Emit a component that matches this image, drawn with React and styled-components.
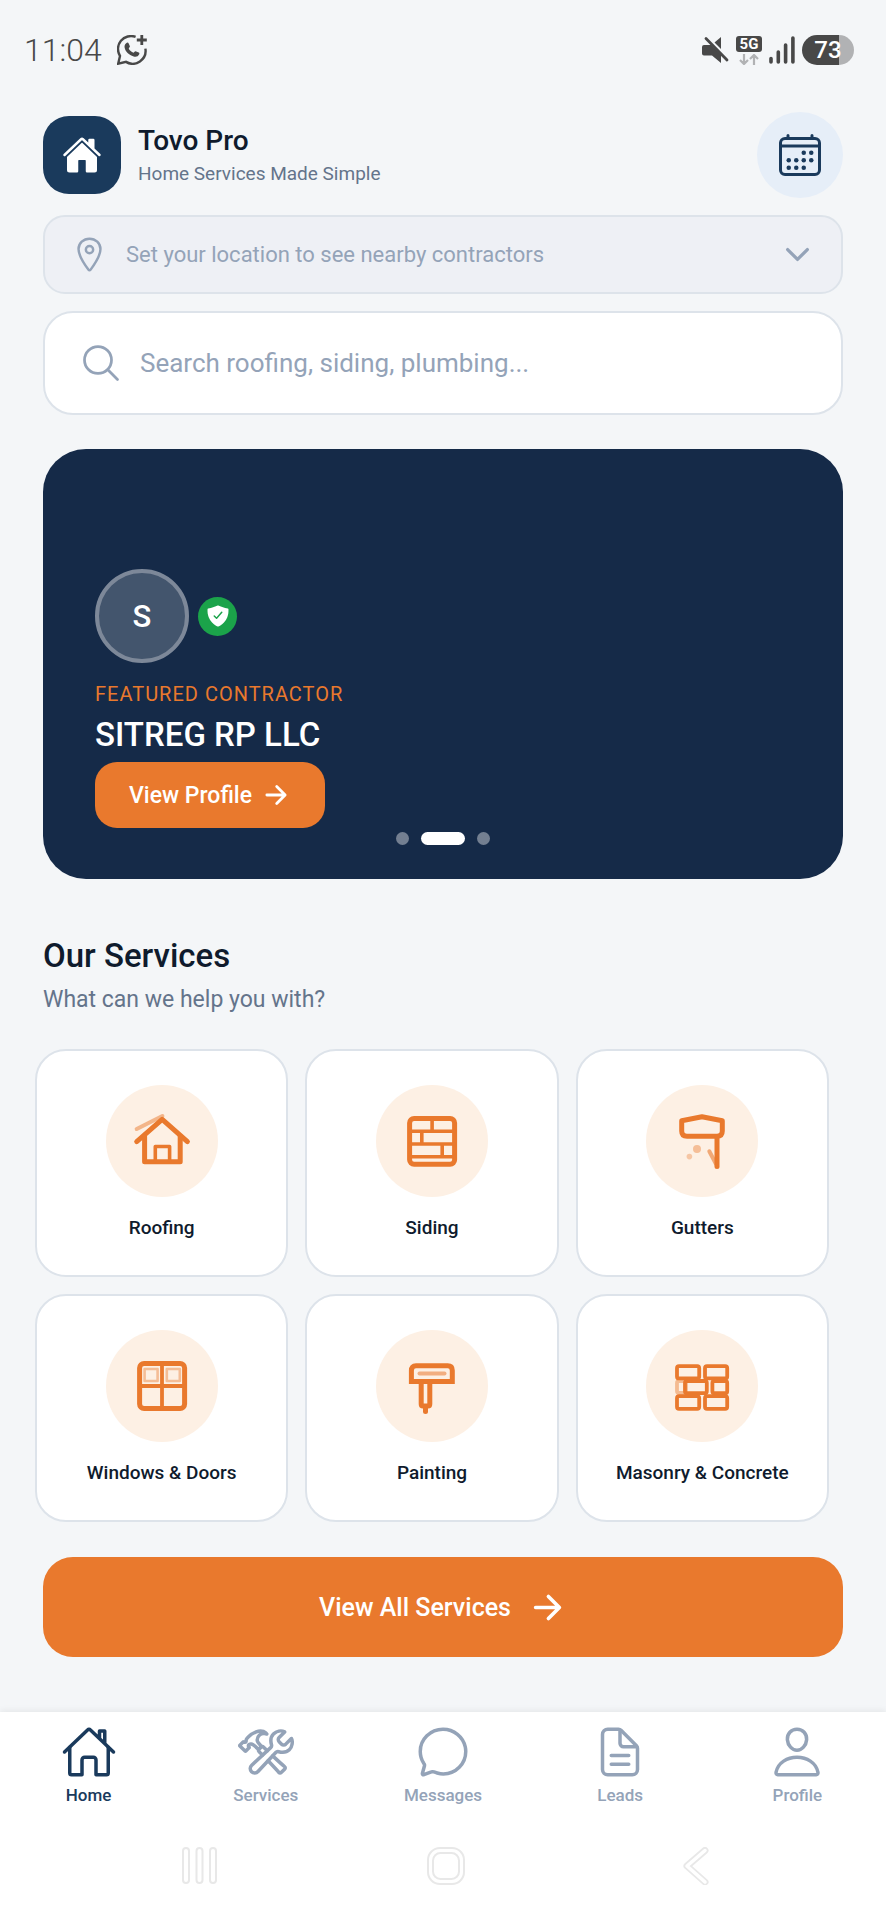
import React from "react";
import styled, { createGlobalStyle } from "styled-components";
import {
  IoHome,
  IoHomeOutline,
  IoCalendarOutline,
  IoLocationOutline,
  IoSearchOutline,
  IoChevronDown,
  IoArrowForward,
  IoShieldCheckmark,
  IoConstructOutline,
  IoChatbubbleOutline,
  IoDocumentTextOutline,
  IoPersonOutline,
} from "react-icons/io5";

const color = {
  page: "#f4f6f8",
  navy: "#1a3a5c",
  deep: "#152a48",
  ink: "#0f1b2d",
  slate: "#64748b",
  muted: "#94a3b8",
  line: "#dde3ea",
  orange: "#e9792d",
  peach: "#fdf0e4",
  status: "#484848",
};

const GlobalStyle = createGlobalStyle`
  *, *::before, *::after { box-sizing: border-box; }
  body { margin: 0; background: ${color.page}; }
  body, button, input { font-family: Roboto, "Liberation Sans", sans-serif; }
  button { border: 0; padding: 0; cursor: pointer; }
  h1, h2, p { margin: 0; font-weight: 400; }
  svg { display: block; flex: none; }
`;

const Screen = styled.div`
  display: flex;
  flex-direction: column;
  min-height: 100vh;
`;

const StatusBar = styled.div`
  display: flex;
  align-items: center;
  justify-content: space-between;
  height: 100px;
  padding: 0 32px 0 24px;
  color: ${color.status};
`;

const StatusGroup = styled.div`
  display: flex;
  align-items: center;
  gap: ${(p) => p.$gap}px;
`;

const Clock = styled.span`
  font-size: 32px;
  line-height: 40px;
  font-weight: 300;
`;

const Network = styled.div`
  display: flex;
  flex-direction: column;
  align-items: center;
  gap: 2px;
`;

const NetworkLabel = styled.span`
  width: 26px;
  border-radius: 3px;
  background: ${color.status};
  color: #fff;
  font-size: 15px;
  line-height: 16px;
  font-weight: 700;
  text-align: center;
`;

const Battery = styled.span`
  width: 52px;
  border-radius: 15px;
  background: linear-gradient(to right, ${color.status} 72%, #b1b2b4 72%);
  color: #fff;
  font-size: 24px;
  line-height: 30px;
  font-weight: 500;
  text-align: center;
`;

const Main = styled.main`
  display: flex;
  flex-direction: column;
  flex: 1;
  padding: 12px 43px 54px;
`;

const Header = styled.header`
  display: flex;
  align-items: center;
  gap: 17px;
  margin-bottom: 17px;
`;

const Logo = styled.div`
  display: grid;
  place-items: center;
  width: 78px;
  height: 78px;
  border-radius: 26px;
  background: ${color.navy};
  color: #fff;
`;

const Brand = styled.div`
  flex: 1;
`;

const BrandName = styled.h1`
  color: ${color.ink};
  font-size: 28px;
  line-height: 38px;
  && { font-weight: 500; }
`;

const Tagline = styled.p`
  color: ${color.slate};
  font-size: 19px;
  line-height: 28px;
`;

const RoundButton = styled.button`
  display: grid;
  place-items: center;
  width: 86px;
  height: 86px;
  border-radius: 50%;
  background: #e6eef8;
  color: ${color.navy};
`;

const LocationButton = styled.button`
  display: flex;
  align-items: center;
  gap: 17px;
  height: 79px;
  margin-bottom: 17px;
  padding: 0 26px 0 25px;
  border: 2px solid ${color.line};
  border-radius: 22px;
  background: #eef0f5;
  color: ${color.muted};
  font-size: 22px;
  text-align: left;

  span { flex: 1; }
`;

const SearchField = styled.label`
  display: flex;
  align-items: center;
  gap: 17px;
  height: 104px;
  margin-bottom: 34px;
  padding: 0 34px;
  border: 2px solid ${color.line};
  border-radius: 30px;
  background: #fff;
  color: ${color.muted};
`;

const SearchInput = styled.input`
  flex: 1;
  min-width: 0;
  padding: 0;
  border: 0;
  outline: 0;
  background: none;
  color: ${color.ink};
  font-size: 26px;

  &::placeholder { color: ${color.muted}; opacity: 1; }
`;

const Featured = styled.section`
  position: relative;
  display: flex;
  flex-direction: column;
  align-items: flex-start;
  justify-content: flex-end;
  min-height: 430px;
  margin-bottom: 52px;
  padding: 51px 52px;
  border-radius: 43px;
  background: ${color.deep};
`;

const AvatarRow = styled.div`
  display: flex;
  align-items: center;
  gap: 9px;
  margin-bottom: 17px;
`;

const Avatar = styled.div`
  display: grid;
  place-items: center;
  width: 94px;
  height: 94px;
  border: 4px solid #7d8899;
  border-radius: 50%;
  background: #43556d;
  color: #fff;
  font-size: 31px;
  font-weight: 500;
`;

const Verified = styled.div`
  display: grid;
  place-items: center;
  width: 39px;
  height: 39px;
  border-radius: 50%;
  background: #1ba34a;
  color: #fff;
`;

const Eyebrow = styled.p`
  color: ${color.orange};
  font-size: 20px;
  line-height: 28px;
  letter-spacing: 1px;
  text-transform: uppercase;
`;

const FeaturedName = styled.h2`
  margin: 4px 0;
  color: #fff;
  font-size: 33px;
  line-height: 46px;
  && { font-weight: 500; }
`;

const ProfileButton = styled.button`
  display: flex;
  align-items: center;
  gap: 9px;
  height: 66px;
  padding: 0 34px;
  border-radius: 22px;
  background: ${color.orange};
  color: #fff;
  font-size: 23px;
  font-weight: 500;
`;

const Dots = styled.div`
  position: absolute;
  right: 0;
  bottom: 34px;
  left: 0;
  display: flex;
  justify-content: center;
  gap: 12px;
`;

const Dot = styled.button`
  width: ${(p) => (p.$active ? 44 : 13)}px;
  height: 13px;
  border-radius: 7px;
  background: ${(p) => (p.$active ? "#fff" : "#737f91")};
`;

const SectionTitle = styled.h2`
  color: ${color.ink};
  font-size: 33px;
  line-height: 50px;
  && { font-weight: 500; }
`;

const SectionHint = styled.p`
  margin-bottom: 31px;
  color: ${color.slate};
  font-size: 23px;
  line-height: 37px;
`;

const ServiceGrid = styled.div`
  display: grid;
  grid-template-columns: repeat(3, 1fr);
  gap: 17px;
  margin: 0 14px 35px -8px;
`;

const ServiceCard = styled.button`
  display: flex;
  flex-direction: column;
  align-items: center;
  gap: 17px;
  height: 228px;
  padding-top: 34px;
  border: 2px solid ${color.line};
  border-radius: 31px;
  background: #fff;
  color: ${color.ink};
  font-size: 19px;
  line-height: 28px;
  font-weight: 500;
`;

const ServiceIcon = styled.span`
  display: grid;
  place-items: center;
  width: 112px;
  height: 112px;
  border-radius: 50%;
  background: ${color.peach};
`;

const AllServicesButton = styled.button`
  display: flex;
  align-items: center;
  justify-content: center;
  gap: 17px;
  height: 100px;
  border-radius: 30px;
  background: ${color.orange};
  color: #fff;
  font-size: 25px;
  font-weight: 500;
`;

const BottomNav = styled.nav`
  display: grid;
  grid-template-columns: repeat(5, 1fr);
  padding-top: 12px;
  background: #fff;
  box-shadow: 0 -2px 6px rgba(0, 0, 0, 0.06);
`;

const NavLink = styled.a`
  display: flex;
  flex-direction: column;
  align-items: center;
  gap: 3px;
  color: ${(p) => (p.$active ? color.navy : color.muted)};
  font-size: 17px;
  line-height: 24px;
  font-weight: 500;
  text-decoration: none;
`;

const SystemBar = styled.div`
  display: grid;
  grid-template-columns: 1fr 38px 1fr;
  align-items: center;
  height: 113px;
  padding: 5px 177px 0 182px;
  background: #fff;
`;

const SystemKey = styled.button`
  justify-self: ${(p) => p.$side};
  background: none;
`;

const Stroked = ({ children }) => (
  <svg
    width="64"
    height="64"
    viewBox="0 0 64 64"
    fill="none"
    stroke={color.orange}
    strokeWidth="5"
    strokeLinecap="round"
    strokeLinejoin="round"
    aria-hidden="true"
  >
    {children}
  </svg>
);

const RoofingIcon = () => (
  <Stroked>
    <path d="M6.7 20 32.4 7" strokeWidth="4" opacity=".5" />
    <path d="M6.7 32.7 32.2 10.3 57.4 32.7" />
    <path d="M14.6 27.5V52.7H50.2V27.5" />
    <path d="M25.3 52V37.5H39.6V52" strokeWidth="3.6" />
  </Stroked>
);

const SidingIcon = () => (
  <Stroked>
    <rect x="9.6" y="9.5" width="45" height="45.8" rx="4.5" />
    <path
      d="M10 22.3H54M10 35H54M10 47.7H54M32.1 10V22M21.8 22.5V35M42.2 35V47.5"
      strokeWidth="3.6"
    />
  </Stroked>
);

const GuttersIcon = () => (
  <Stroked>
    <path d="M11.7 11.7 32 7.7 52.3 11.7V22Q52.3 27.3 47 27.3H17Q11.7 27.3 11.7 22Z" />
    <path d="M39.3 42.3 46 55" strokeWidth="4" opacity=".6" />
    <path d="M47 27.5V57.5" />
    <circle cx="27" cy="40" r="4" fill={color.orange} stroke="none" opacity=".42" />
    <circle cx="19.4" cy="47.6" r="2.8" fill={color.orange} stroke="none" opacity=".35" />
  </Stroked>
);

const WindowsIcon = () => (
  <Stroked>
    <rect x="9.6" y="9.5" width="45" height="45" rx="4.5" />
    <path d="M32 10V54M10 32H54" strokeWidth="3.8" />
    <g strokeWidth="2.6" opacity=".42">
      <rect x="14.6" y="15" width="13" height="12" />
      <rect x="36.8" y="15" width="13" height="12" />
    </g>
  </Stroked>
);

const PaintingIcon = () => (
  <Stroked>
    <path
      d="M11.4 27.4V16.5Q11.4 11.8 16 11.8H47.7Q52.3 11.8 52.3 16.5V27.4Z"
      strokeLinejoin="miter"
    />
    <path d="M19.5 19.4H44.5" strokeWidth="4" opacity=".55" />
    <path d="M21.2 28V50Q21.2 52 23 52H28Q29.8 52 29.8 50V28" />
    <path d="M25.5 53V57.5" />
  </Stroked>
);

const MasonryIcon = () => (
  <Stroked>
    <g strokeWidth="3.8">
      <rect x="7" y="27" width="9" height="12" rx="2" opacity=".45" />
      <rect x="7" y="12.2" width="22.2" height="12.2" rx="2" />
      <rect x="35" y="12.2" width="22.2" height="12.2" rx="2" />
      <rect x="15" y="27" width="21.8" height="12.2" rx="2" />
      <rect x="42.4" y="27" width="14.8" height="12.2" rx="2" />
      <rect x="7" y="42.2" width="22.2" height="12.6" rx="2" />
      <rect x="35" y="42.2" width="22.2" height="12.6" rx="2" />
    </g>
  </Stroked>
);

const ChatPlusIcon = () => (
  <svg width="30" height="30" viewBox="0 0 30 30" fill="none" aria-hidden="true">
    <path
      d="M18.6 1.9A13 13 0 0 0 3 21L1.2 28.7 9 26.9A13 13 0 0 0 28.4 13.6"
      stroke={color.status}
      strokeWidth="2.4"
    />
    <path d="M24.8 0V10M19.8 5H29.8" stroke={color.status} strokeWidth="2.8" />
    <path
      d="M9.2 8.2c1-.9 2-.8 2.5.2l1.2 2.8c.2.6-.8 1.6-1.2 2.2 1 2 2.6 3.5 4.9 4.3.7-.6 1.4-1.7 2-1.5l3.1 1.4c.8.4.8 1 .5 1.7-1 2.3-3.2 2.9-5.6 2.2-4.7-1.4-8.3-5-9-9-.3-1.8.4-3.3 1.6-4.3Z"
      fill={color.status}
    />
  </svg>
);

const MutedIcon = () => (
  <svg width="27" height="28" viewBox="0 0 27 28" fill={color.status} aria-hidden="true">
    <path d="M2 9H9L19 19V27L10 19.5H2Q0 19.5 0 17.5V11Q0 9 2 9ZM12.5 6.5 19 1V13Z" />
    <path d="M6 2.5 27 24" stroke={color.page} strokeWidth="3" />
    <path d="M4 2.5 25 24" stroke={color.status} strokeWidth="2.8" strokeLinecap="round" />
  </svg>
);

const DataArrows = () => (
  <svg
    width="20"
    height="11"
    viewBox="0 0 20 11"
    fill="none"
    stroke="#b1b2b4"
    strokeWidth="2.2"
    aria-hidden="true"
  >
    <path d="M5 0V10M1 6 5 10 9 6M15 11V1M11 5 15 1 19 5" />
  </svg>
);

const SignalIcon = () => (
  <svg
    width="26"
    height="28"
    viewBox="0 0 26 28"
    stroke={color.status}
    strokeWidth="3.6"
    strokeLinecap="round"
    aria-hidden="true"
  >
    <path d="M2 22.5V26M9.3 16V26M16.6 9V26M23.9 2V26" />
  </svg>
);

const RecentsIcon = () => (
  <svg width="36" height="38" viewBox="0 0 36 38" fill="none" stroke="#e8e8e8" strokeWidth="2" aria-hidden="true">
    <rect x="1" y="1" width="6" height="35" rx="3" />
    <rect x="14.5" y="1" width="6" height="35" rx="3" />
    <rect x="28" y="1" width="6" height="35" rx="3" />
  </svg>
);

const HomeKeyIcon = () => (
  <svg width="38" height="38" viewBox="0 0 38 38" fill="none" stroke="#e8e8e8" strokeWidth="2" aria-hidden="true">
    <rect x="1" y="1" width="36" height="36" rx="12" />
    <rect x="6" y="6" width="26" height="26" rx="7.5" />
  </svg>
);

const BackIcon = () => (
  <svg width="26" height="38" viewBox="0 0 26 38" fill="none" strokeLinecap="round" strokeLinejoin="round" aria-hidden="true">
    <path d="M22 3.5 4 19 22 35" stroke="#e8e8e8" strokeWidth="7" />
    <path d="M22 3.5 4 19 22 35" stroke="#fff" strokeWidth="3.5" />
  </svg>
);

const services = [
  { name: "Roofing", Icon: RoofingIcon },
  { name: "Siding", Icon: SidingIcon },
  { name: "Gutters", Icon: GuttersIcon },
  { name: "Windows & Doors", Icon: WindowsIcon },
  { name: "Painting", Icon: PaintingIcon },
  { name: "Masonry & Concrete", Icon: MasonryIcon },
];

const tabs = [
  { name: "Home", Icon: IoHomeOutline, active: true },
  { name: "Services", Icon: IoConstructOutline },
  { name: "Messages", Icon: IoChatbubbleOutline },
  { name: "Leads", Icon: IoDocumentTextOutline },
  { name: "Profile", Icon: IoPersonOutline },
];

export default function App() {
  return (
    <Screen>
      <GlobalStyle />
      <StatusBar>
        <StatusGroup $gap={15}>
          <Clock>11:04</Clock>
          <ChatPlusIcon />
        </StatusGroup>
        <StatusGroup $gap={7}>
          <MutedIcon />
          <Network>
            <NetworkLabel>5G</NetworkLabel>
            <DataArrows />
          </Network>
          <SignalIcon />
          <Battery>73</Battery>
        </StatusGroup>
      </StatusBar>

      <Main>
        <Header>
          <Logo>
            <IoHome size={40} />
          </Logo>
          <Brand>
            <BrandName>Tovo Pro</BrandName>
            <Tagline>Home Services Made Simple</Tagline>
          </Brand>
          <RoundButton aria-label="Calendar">
            <IoCalendarOutline size={48} />
          </RoundButton>
        </Header>

        <LocationButton>
          <IoLocationOutline size={39} />
          <span>Set your location to see nearby contractors</span>
          <IoChevronDown size={35} />
        </LocationButton>

        <SearchField>
          <IoSearchOutline size={44} />
          <SearchInput
            type="text"
            aria-label="Search services"
            placeholder="Search roofing, siding, plumbing..."
          />
        </SearchField>

        <Featured>
          <AvatarRow>
            <Avatar>S</Avatar>
            <Verified>
              <IoShieldCheckmark size={24} />
            </Verified>
          </AvatarRow>
          <Eyebrow>Featured Contractor</Eyebrow>
          <FeaturedName>SITREG RP LLC</FeaturedName>
          <ProfileButton>
            View Profile
            <IoArrowForward size={30} />
          </ProfileButton>
          <Dots>
            <Dot aria-label="Slide 1" />
            <Dot aria-label="Slide 2" $active />
            <Dot aria-label="Slide 3" />
          </Dots>
        </Featured>

        <SectionTitle>Our Services</SectionTitle>
        <SectionHint>What can we help you with?</SectionHint>

        <ServiceGrid>
          {services.map(({ name, Icon }) => (
            <ServiceCard key={name}>
              <ServiceIcon>
                <Icon />
              </ServiceIcon>
              {name}
            </ServiceCard>
          ))}
        </ServiceGrid>

        <AllServicesButton>
          View All Services
          <IoArrowForward size={39} />
        </AllServicesButton>
      </Main>

      <BottomNav>
        {tabs.map(({ name, Icon, active }) => (
          <NavLink key={name} href="#" $active={active} aria-current={active ? "page" : undefined}>
            <Icon size={56} />
            {name}
          </NavLink>
        ))}
      </BottomNav>
      <SystemBar>
        <SystemKey $side="start" aria-label="Recent apps">
          <RecentsIcon />
        </SystemKey>
        <SystemKey $side="center" aria-label="Home screen">
          <HomeKeyIcon />
        </SystemKey>
        <SystemKey $side="end" aria-label="Back">
          <BackIcon />
        </SystemKey>
      </SystemBar>
    </Screen>
  );
}
